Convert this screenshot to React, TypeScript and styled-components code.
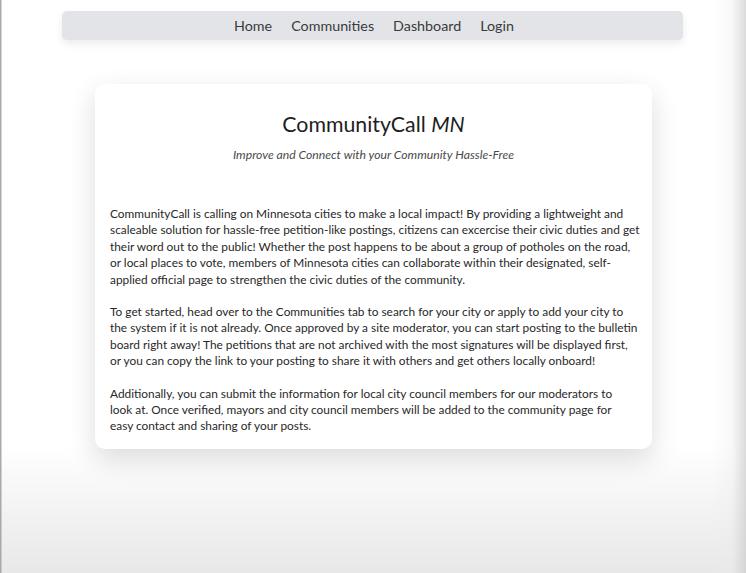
import React from "react";
import styled, { createGlobalStyle } from "styled-components";

const GlobalStyle = createGlobalStyle`
  html, body {
    margin: 0;
    padding: 0;
    height: 100%;
  }
  body {
    font-family: Lato, "Open Sans", sans-serif;
    color: #212529;
    background:
      linear-gradient(90deg, #a9a9a9 0, #a9a9a9 1px, rgba(255,255,255,0) 2px),
      linear-gradient(270deg, rgba(205,205,205,0.7) 0, rgba(235,235,235,0.35) 14px, rgba(255,255,255,0) 34px),
      linear-gradient(180deg, #ffffff 0, #ffffff 445px, #e8e8e8 573px);
    background-repeat: no-repeat;
    background-size: 100% 573px;
  }
  #root {
    min-height: 573px;
  }
`;

const Page = styled.div`
  display: flex;
  flex-direction: column;
  align-items: center;
  padding-top: 11px;
`;

const NavBar = styled.nav`
  width: 621px;
  height: 29px;
  margin-left: -2px;
  display: flex;
  align-items: center;
  justify-content: center;
  gap: 19px;
  padding-left: 4px;
  box-sizing: border-box;
  background: #e3e4e8;
  border-radius: 5px;
  box-shadow: 0 4px 8px rgba(0, 0, 0, 0.08);
`;

const NavLink = styled.a`
  font-size: 14.3px;
  color: #3a3a3a;
  text-decoration: none;
  cursor: pointer;
`;

const Card = styled.main`
  width: 557px;
  margin-top: 44px;
  margin-left: 1px;
  box-sizing: border-box;
  padding: 25px 12px 14px 15px;
  background: #ffffff;
  border-radius: 10px;
  box-shadow: 0 10px 28px rgba(0, 0, 0, 0.14);
`;

const Title = styled.h1`
  margin: 0 0 0 -3px;
  text-align: center;
  font-size: 21.3px;
  font-weight: 400;
  color: #1e1e1e;
  line-height: 30px;

  em {
    font-style: italic;
  }
`;

const Subtitle = styled.p`
  margin: 8px 0 0 -3px;
  text-align: center;
  font-size: 12.2px;
  font-style: italic;
  color: #4a4a4a;
  line-height: 16px;
`;

const Body = styled.div`
  margin-top: 43px;
  display: flex;
  flex-direction: column;
  gap: 16px;
`;

const Paragraph = styled.p`
  margin: 0;
  font-size: 11.86px;
  line-height: 16.4px;
  color: #282828;
`;

const Line = styled.span`
  display: block;
  white-space: nowrap;
`;

const links = ["Home", "Communities", "Dashboard", "Login"];

const paragraphs: string[][] = [
  [
    "CommunityCall is calling on Minnesota cities to make a local impact! By providing a lightweight and",
    "scaleable solution for hassle-free petition-like postings, citizens can excercise their civic duties and get",
    "their word out to the public! Whether the post happens to be about a group of potholes on the road,",
    "or local places to vote, members of Minnesota cities can collaborate within their designated, self-",
    "applied official page to strengthen the civic duties of the community.",
  ],
  [
    "To get started, head over to the Communities tab to search for your city or apply to add your city to",
    "the system if it is not already. Once approved by a site moderator, you can start posting to the bulletin",
    "board right away! The petitions that are not archived with the most signatures will be displayed first,",
    "or you can copy the link to your posting to share it with others and get others locally onboard!",
  ],
  [
    "Additionally, you can submit the information for local city council members for our moderators to",
    "look at. Once verified, mayors and city council members will be added to the community page for",
    "easy contact and sharing of your posts.",
  ],
];

const App = () => {
  return (
    <>
      <GlobalStyle />
      <Page>
        <NavBar>
          {links.map((l) => (
            <NavLink key={l}>{l}</NavLink>
          ))}
        </NavBar>
        <Card>
          <Title>
            CommunityCall <em>MN</em>
          </Title>
          <Subtitle>Improve and Connect with your Community Hassle-Free</Subtitle>
          <Body>
            {paragraphs.map((lines, i) => (
              <Paragraph key={i}>
                {lines.map((line) => (
                  <Line key={line}>{line}</Line>
                ))}
              </Paragraph>
            ))}
          </Body>
        </Card>
      </Page>
    </>
  );
};

export default App;
